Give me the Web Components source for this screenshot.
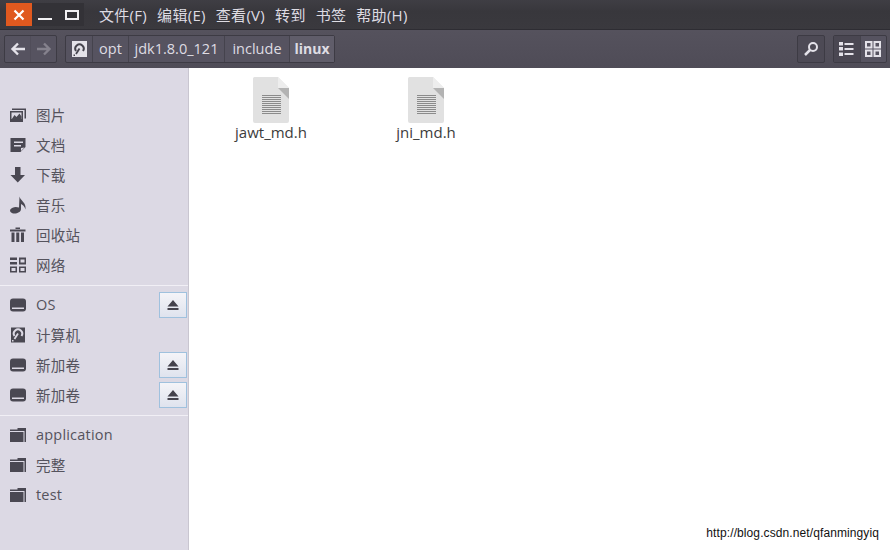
<!DOCTYPE html>
<html>
<head>
<meta charset="utf-8">
<title>linux</title>
<style>
  html, body { margin: 0; padding: 0; height: 100%; overflow: hidden; }
  body { font-family: "Open Sans", "Noto Sans CJK SC", sans-serif; }
</style>
</head>
<body>
<fm-window></fm-window>
<script>
const FONT = '"Open Sans", "Noto Sans CJK SC", sans-serif';

const ICONS = {
  pictures: '<path d="M1 5h13v11H1z"/><path fill="#dcd9e4" d="M2.500 6.500h10v6.500h-10z"/><path d="M2.500 13.500l3-4.500 2 2 3-3.500 2 3v3z"/><path d="M3 2.500h14v10h-1.500V4H3z"/>',
  documents: '<path d="M1.500 2h15v9l-5 5h-10z"/><path fill="#dcd9e4" d="M5 5.500h9V7H5zM5 9h7v1.500H5zM12 12l3.500-.500-3.500 3.500z"/>',
  download: '<path d="M6 1h5.500v8h4.500L8.750 16.500 1.500 9H6z"/>',
  music: '<path d="M10.500 .500c.8 4 7 6 6 13-.8-3-3-5-4.500-5.500v5c0 2.800-3.500 4.500-6.500 4.500S.300 15.500 1.300 13.500C3 10.800 7 10.300 10 11.500z"/>',
  trash: '<path d="M1 3.500h15.500v2H1zM6.500 1.500h4.500V3H6.500zM2.500 6.500h3V16h-3zM7.250 6.500h3V16h-3zM12 6.500h3V16h-3z"/>',
  network: '<path d="M1 1.500h7v2.500H1zM1 6h7v2.500H1z"/><path fill-rule="evenodd" d="M10 1.500h7v7h-7zM11.500 3.500v3h4v-3zM1 10.500h7v6H1zM2.500 12v3h4v-3zM10 10.500h7v6h-7zM11.500 12v3h4v-3z"/>',
  drive: '<rect x="1" y="2.500" width="16" height="13" rx="3"/><path fill="#dcd9e4" d="M3 11.500h12V13H3z"/>',
  computer: '<path d="M2 1.500h14v15H2z"/><path d="M5.500 10a4.200 4.200 0 1 1 7 0" fill="none" stroke="#dcd9e4" stroke-width="2"/><path d="M9 7.500L5.500 13" stroke="#dcd9e4" stroke-width="1.800"/><path fill="#dcd9e4" d="M3 14h1.500v1.500H3z"/>',
  folder: '<path d="M1 3.500h7.500V2H17v14h-1.500V5H1z"/><path d="M1 6h13.500v10H1z"/>'
};

const iconSvg = name => `<svg viewBox="0 0 18 18" width="18" height="18" fill="#4a4852">${ICONS[name]}</svg>`;

class FmWindow extends HTMLElement {
  constructor() {
    super();
    this.attachShadow({mode: 'open'}).innerHTML = `
      <style>
        :host { display: flex; flex-direction: column; width: 890px; height: 550px; position: relative; background: #fff; font-family: ${FONT}; }
        .main { display: flex; flex: 1; min-height: 0; }
        .mark { position: absolute; right: 11px; bottom: 9px; font: 12px/16px "Liberation Sans", Arial, sans-serif; letter-spacing: .1px; color: #111; }
      </style>
      <fm-titlebar></fm-titlebar>
      <fm-toolbar></fm-toolbar>
      <div class="main">
        <fm-sidebar></fm-sidebar>
        <fm-files></fm-files>
      </div>
      <div class="mark">http://blog.csdn.net/qfanmingyiq</div>`;
  }
}

class FmTitlebar extends HTMLElement {
  constructor() {
    super();
    const menus = ['文件(F)', '编辑(E)', '查看(V)', '转到', '书签', '帮助(H)'];
    this.attachShadow({mode: 'open'}).innerHTML = `
      <style>
        :host { display: flex; align-items: center; height: 30px; flex: none; box-sizing: border-box; padding: 3px 0 3px 6px; background: linear-gradient(#3f3e44, #38373c 40%, #3a393e); border-bottom: 1px solid #2e2d33; }
        .ctl { display: flex; width: 78px; height: 23px; background: #333237; flex: none; }
        .close { width: 26px; background: #e0591f; display: flex; align-items: center; justify-content: center; }
        .min { width: 26px; position: relative; }
        .min i { position: absolute; left: 6px; top: 15px; width: 14px; height: 2px; background: #f2f1f4; }
        .max { width: 26px; position: relative; }
        .max i { position: absolute; left: 7px; top: 7px; width: 10px; height: 6px; border: 2px solid #f2f1f4; }
        nav { display: flex; gap: 10px; margin-left: 15px; font-size: 15px; letter-spacing: .3px; color: #dedce3; white-space: nowrap; }
        nav span { margin-top: -1px; }
      </style>
      <div class="ctl">
        <div class="close"><svg width="12" height="12" viewBox="0 0 12 12"><path d="M1.500 1.500l9 9M10.500 1.500l-9 9" stroke="#fff" stroke-width="2.200"/></svg></div>
        <div class="min"><i></i></div>
        <div class="max"><i></i></div>
      </div>
      <nav>${menus.map(m => `<span>${m}</span>`).join('')}</nav>`;
  }
}

class FmToolbar extends HTMLElement {
  constructor() {
    super();
    this.attachShadow({mode: 'open'}).innerHTML = `
      <style>
        :host { display: flex; align-items: center; height: 38px; flex: none; box-sizing: border-box; padding: 5px 3px 5px 4px; background: linear-gradient(#55525d, #4f4c57); color: #dedce3; font-size: 14.500px; }
        .group { display: flex; height: 28px; border: 1px solid #3d3b44; box-sizing: border-box; background: #565360; border-radius: 2px; }
        .group > * { display: flex; align-items: center; justify-content: center; box-sizing: border-box; }
        .group > * + * { border-left: 1px solid #45434d; }
        .nav { width: 53px; margin-right: 8px; }
        .nav > * { flex: 1; }
        .nav > * + * { border-left-color: #504d59; }
        .path { width: 270px; }
        .path span { height: 100%; padding-bottom: 1px; }
        .cur { font-weight: 700; background: #605d6a; font-size: 14px; }
        .spacer { flex: 1; }
        .search { width: 28px; margin-right: 8px; background: #4d4a55; }
        .search > * { flex: 1; }
        .view { width: 54px; }
        .view > * { flex: 1; }
        .view .on { background: #4a4752; }
      </style>
      <div class="group nav">
        <div><svg width="16" height="14" viewBox="0 0 16 14"><path d="M15 7H3M8 1.500L2.500 7 8 12.500" fill="none" stroke="#e4e2e9" stroke-width="2.400"/></svg></div>
        <div><svg width="16" height="14" viewBox="0 0 16 14"><path d="M1 7h12M8 1.500L13.500 7 8 12.500" fill="none" stroke="#85828d" stroke-width="2.400"/></svg></div>
      </div>
      <div class="group path">
        <span style="width:26px"><svg width="15" height="16" viewBox="0 0 15 16"><path fill="#e4e2e9" d="M0 0h15v16H0z"/><path d="M4 10a4.200 4.200 0 1 1 7 0" fill="none" stroke="#45434d" stroke-width="2"/><path d="M7.500 7.500L4 13" stroke="#45434d" stroke-width="1.800"/><path fill="#45434d" d="M1.500 13.500H3V15H1.500z"/></svg></span>
        <span style="width:36px">opt</span>
        <span style="width:96px">jdk1.8.0_121</span>
        <span style="width:65px">include</span>
        <span class="cur" style="flex:1">linux</span>
      </div>
      <div class="spacer"></div>
      <div class="group search">
        <div><svg width="16" height="16" viewBox="0 0 16 16"><circle cx="10" cy="6" r="4" fill="none" stroke="#e4e2e9" stroke-width="2"/><path d="M7 9l-5 5" stroke="#e4e2e9" stroke-width="2.500"/></svg></div>
      </div>
      <div class="group view">
        <div class="on"><svg width="15" height="14" viewBox="0 0 15 14"><path fill="#e4e2e9" d="M0 0h4v3.500H0zM5.500 1h9v2h-9zM0 5h4v3.500H0zM5.500 6h9v2h-9zM0 10.500h4V14H0zM5.500 11h9v2h-9z"/></svg></div>
        <div><svg width="16" height="16" viewBox="0 0 16 16" fill="none" stroke="#e4e2e9" stroke-width="2"><path d="M1 1h5.500v5.500H1zM9.500 1H15v5.500H9.500zM1 9.500h5.500V15H1zM9.500 9.500H15V15H9.500z"/></svg></div>
      </div>`;
  }
}

class FmSidebar extends HTMLElement {
  constructor() {
    super();
    this.attachShadow({mode: 'open'}).innerHTML = `
      <style>
        :host { display: block; width: 189px; flex: none; box-sizing: border-box; padding-top: 32px; background: #dcd9e4; border-right: 1px solid #c9c6d0; }
        hr { height: 1px; margin: 5px 0 4px; border: 0; background: #f1eff5; }
      </style>
      <fm-place icon="pictures">图片</fm-place>
      <fm-place icon="documents">文档</fm-place>
      <fm-place icon="download">下载</fm-place>
      <fm-place icon="music">音乐</fm-place>
      <fm-place icon="trash">回收站</fm-place>
      <fm-place icon="network">网络</fm-place>
      <hr>
      <fm-place icon="drive" eject>OS</fm-place>
      <fm-place icon="computer">计算机</fm-place>
      <fm-place icon="drive" eject>新加卷</fm-place>
      <fm-place icon="drive" eject>新加卷</fm-place>
      <hr>
      <fm-place icon="folder">application</fm-place>
      <fm-place icon="folder">完整</fm-place>
      <fm-place icon="folder">test</fm-place>`;
  }
}

class FmPlace extends HTMLElement {
  constructor() {
    super();
    const eject = this.hasAttribute('eject') ? `
      <div class="eject"><svg width="12" height="10" viewBox="0 0 12 10"><path fill="#45434d" d="M6 0l5.500 6.500H.5zM.5 8h11v2H.5z"/></svg></div>` : '';
    this.attachShadow({mode: 'open'}).innerHTML = `
      <style>
        :host { display: flex; align-items: center; height: 30px; box-sizing: border-box; padding: 0 1px 0 9px; color: #55535d; font-size: 14.500px; letter-spacing: .2px; }
        svg { flex: none; display: block; }
        .label { margin: -2px 0 0 9px; flex: 1; white-space: nowrap; }
        .eject { width: 28px; height: 26px; box-sizing: border-box; display: flex; align-items: center; justify-content: center; background: linear-gradient(#f4f4f8, #dfe3ee); border: 1px solid #9fc1de; }
      </style>
      ${iconSvg(this.getAttribute('icon'))}
      <span class="label"><slot></slot></span>${eject}`;
  }
}

class FmFiles extends HTMLElement {
  constructor() {
    super();
    this.attachShadow({mode: 'open'}).innerHTML = `
      <style>
        :host { display: flex; flex: 1; align-items: flex-start; gap: 1px; padding: 9px 0 0 5px; background: #fff; }
      </style>
      <fm-file>jawt_md.h</fm-file>
      <fm-file>jni_md.h</fm-file>`;
  }
}

class FmFile extends HTMLElement {
  constructor() {
    super();
    const lines = Array.from({length: 10}, (_, i) => `<path d="M9 ${18.500 + i * 2}h19" stroke="#8b8b8b" stroke-width="1"/>`).join('');
    this.attachShadow({mode: 'open'}).innerHTML = `
      <style>
        :host { display: flex; flex-direction: column; align-items: center; width: 154px; color: #3c3c3c; font-size: 15px; line-height: 20px; }
        svg { display: block; margin-bottom: -1px; }
      </style>
      <svg width="36" height="46" viewBox="0 0 36 46">
        <path fill="#e1e1e1" d="M1.500 0H25L36 11v33a2 2 0 0 1-2 2H2a2 2 0 0 1-2-2V1.500A1.500 1.500 0 0 1 1.500 0z"/>
        <path fill="#ededed" d="M25 0l11 11H25z"/>
        <path fill="#b3b3b3" d="M25 11h11v11z"/>
        ${lines}
      </svg>
      <span><slot></slot></span>`;
  }
}

customElements.define('fm-window', FmWindow);
customElements.define('fm-titlebar', FmTitlebar);
customElements.define('fm-toolbar', FmToolbar);
customElements.define('fm-sidebar', FmSidebar);
customElements.define('fm-place', FmPlace);
customElements.define('fm-files', FmFiles);
customElements.define('fm-file', FmFile);
</script>
</body>
</html>
